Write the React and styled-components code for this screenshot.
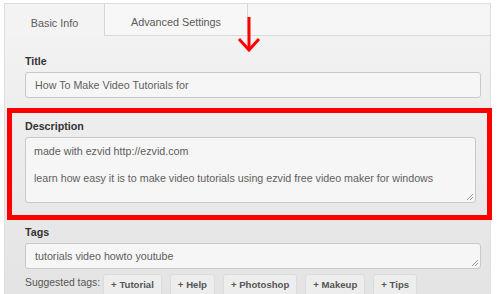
import React from 'react';
import styled, { createGlobalStyle } from 'styled-components';

const GlobalStyle = createGlobalStyle`
  html, body {
    margin: 0;
    padding: 0;
    background: #ffffff;
    font-family: 'Liberation Sans', Arial, sans-serif;
    overflow: hidden;
  }
`;

const suggested = ['Tutorial', 'Help', 'Photoshop', 'Makeup', 'Tips'];

const App = () => {
  return (
    <>
      <GlobalStyle />
      <Page>
        <Panel>
          <TabBar>
            <Tab active>Basic Info</Tab>
            <Tab wide>Advanced Settings</Tab>
          </TabBar>
          <Arrow width='24' height='36' viewBox='0 0 24 36'>
            <path d='M12 0 V33' stroke='#ff0000' strokeWidth='3' fill='none' />
            <path d='M2 22 L12 33 L22 22' stroke='#ff0000' strokeWidth='3' fill='none' />
          </Arrow>
          <Content>
            <Field>
              <Label>Title</Label>
              <Input>How To Make Video Tutorials for</Input>
            </Field>
            <Highlight>
              <Label>Description</Label>
              <TextArea>
                <Line>made with ezvid http://ezvid.com</Line>
                <Line>learn how easy it is to make video tutorials using ezvid free video maker for windows</Line>
                <Grip />
              </TextArea>
            </Highlight>
            <Field gap>
              <Label>Tags</Label>
              <Input>
                tutorials video howto youtube
                <Grip />
              </Input>
            </Field>
            <SuggestRow>
              <SuggestLabel>Suggested tags:</SuggestLabel>
              {suggested.map((t) => (
                <TagButton key={t}>+ {t}</TagButton>
              ))}
            </SuggestRow>
          </Content>
        </Panel>
      </Page>
    </>
  );
};

const Page = styled.div`
  padding: 3px 0 0 4px;
  width: 487px;
`;

const Panel = styled.div`
  position: relative;
  border: 1px solid #dedede;
  border-bottom: none;
  height: 300px;
  background: linear-gradient(#f4f4f4, #e3e3e3);
`;

const TabBar = styled.div`
  display: flex;
  height: 31px;
  background: #f6f6f6;
  border-bottom: 1px solid #d9d9d9;
`;

const Tab = styled.div`
  width: ${(p) => (p.wide ? '142px' : '99px')};
  display: flex;
  align-items: center;
  justify-content: center;
  font-size: 10.8px;
  color: #5a5a5a;
  border-right: 1px solid #d6d6d6;
  background: ${(p) => (p.active ? '#f3f3f3' : '#f7f7f7')};
  margin-bottom: ${(p) => (p.active ? '-1px' : '0')};
  padding-top: 5px;
`;

const Arrow = styled.svg`
  position: absolute;
  left: 232px;
  top: 13px;
`;

const Content = styled.div`
  padding: 18px 9px 0 20px;
`;

const Field = styled.div`
  display: flex;
  flex-direction: column;
  margin-top: ${(p) => (p.gap ? '5px' : '0')};
`;

const Label = styled.div`
  font-size: 10.7px;
  font-weight: bold;
  color: #333;
  line-height: 14px;
  margin-bottom: 4px;
`;

const Input = styled.div`
  position: relative;
  height: 24px;
  border: 1px solid #c9c9c9;
  border-radius: 3px;
  background: #f6f6f6;
  display: flex;
  align-items: center;
  padding-left: 9px;
  font-size: 10.7px;
  color: #5e5e5e;
  margin-bottom: 10px;
`;

const Highlight = styled.div`
  margin: 0 -11px 0 -18px;
  border: 5px solid #ff0000;
  padding: 6px 11px 12px 13px;
`;

const TextArea = styled.div`
  position: relative;
  height: 58px;
  border: 1px solid #c9c9c9;
  border-radius: 3px;
  background: #f6f6f6;
  padding: 6px 8px 0;
  font-size: 10.7px;
  color: #5e5e5e;
`;

const Line = styled.div`
  line-height: 14px;
  margin-bottom: 13px;
`;

const Grip = styled.span`
  position: absolute;
  right: 2px;
  bottom: 2px;
  width: 6px;
  height: 6px;
  background: linear-gradient(
    135deg,
    transparent 45%,
    #999 45%,
    #999 55%,
    transparent 55%,
    transparent 70%,
    #999 70%,
    #999 80%,
    transparent 80%
  );
`;

const SuggestRow = styled.div`
  display: flex;
  align-items: flex-start;
  gap: 8px;
  margin-top: -5px;
`;

const SuggestLabel = styled.div`
  font-size: 10.4px;
  color: #555;
  line-height: 18px;
  margin-top: 0;
  margin-right: -5px;
`;

const TagButton = styled.div`
  font-size: 9.6px;
  font-weight: bold;
  color: #555;
  border: 1px solid #dcdcdc;
  border-radius: 3px;
  background: #ededed;
  padding: 3px 7px 0;
  line-height: 13px;
  height: 20px;
`;

export default App;
